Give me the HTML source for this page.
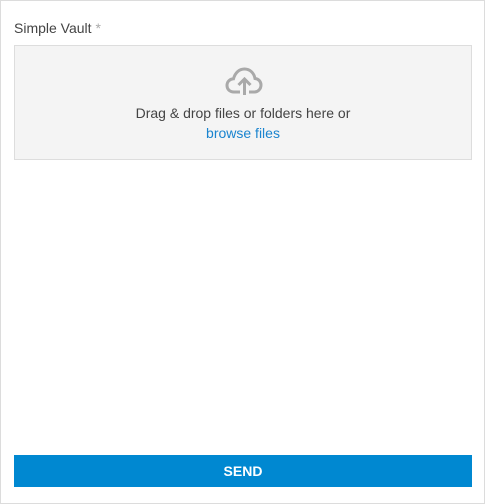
<!DOCTYPE html>
<html><head><style>
html,body{margin:0;padding:0;background:#fff}
.frame{position:absolute;left:0;top:0;width:483px;height:502px;border:1px solid #dcdcdc;font-family:"Liberation Sans",Arial,sans-serif}
.label{position:absolute;left:13px;top:19px;font-size:14px;color:#444}
.label span{color:#aaa}
.drop{position:absolute;left:13px;top:44px;width:456px;height:113px;background:#f4f4f4;border:1px solid #ddd;text-align:center}
.drop svg{position:absolute;left:210px;top:19px}
.t1{position:absolute;left:0;right:0;top:59px;font-size:14px;color:#444}
.t2{position:absolute;left:0;right:0;top:79px;font-size:14px;color:#1a84cf}
.btn{position:absolute;left:13px;top:454px;width:458px;height:32px;background:#0088d1;color:#fff;font-weight:bold;font-size:14px;text-align:center;line-height:32px}
</style></head><body>
<div class="frame">
<div class="label">Simple Vault <span>*</span></div>
<div class="drop">
<svg width="38" height="32" viewBox="0 0 38 32"><path d="M15 27H9C4.5 27 2 24 2 20.5 2 16.5 5 14 8.5 13.8 10 8 14 4 19.5 4 25 4 29 8 30 13.5 33.5 13.8 36 16.5 36 20 36 24 33 27 29.5 27H24" fill="none" stroke="#a9a9a9" stroke-width="3"/><path d="M19.5 30V14M13.5 20L19.5 14 25.5 20" fill="none" stroke="#a9a9a9" stroke-width="3"/></svg>
<div class="t1">Drag &amp; drop files or folders here or</div>
<div class="t2">browse files</div>
</div>
<div class="btn">SEND</div>
</div>
</body></html>
